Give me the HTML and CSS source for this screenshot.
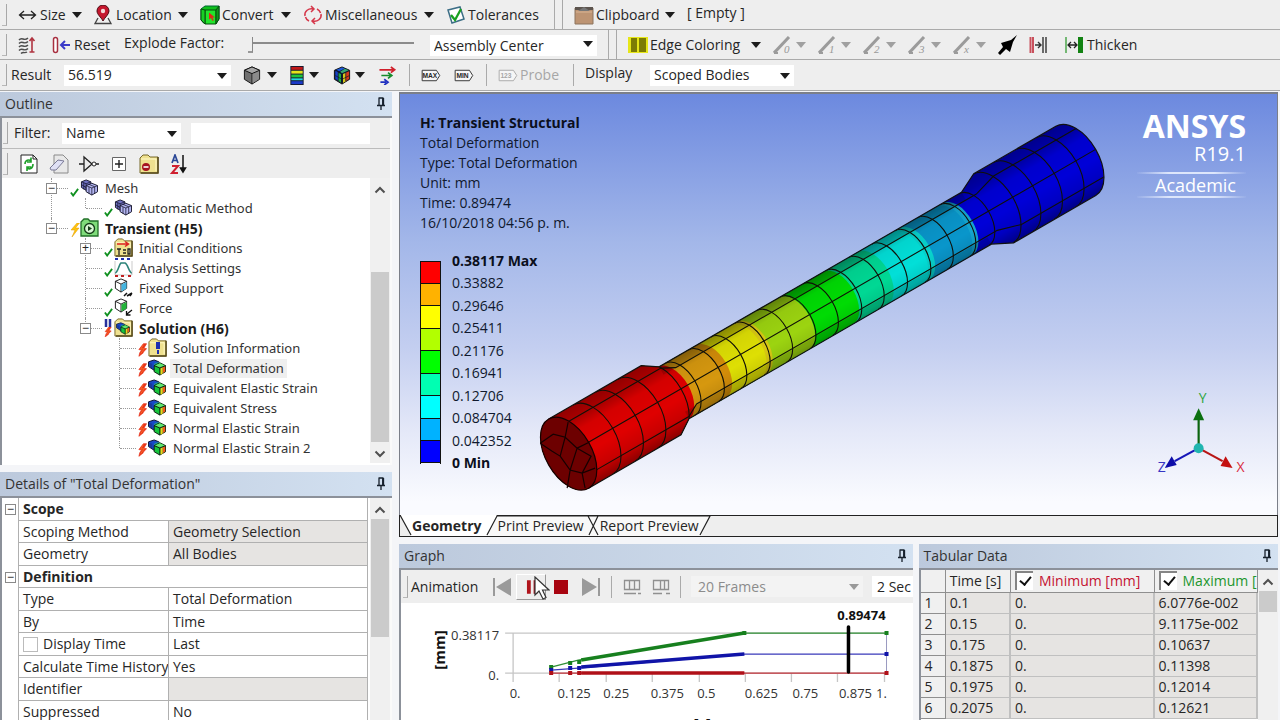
FILE: index.html
```html
<!DOCTYPE html>
<html lang="en">
<head>
<meta charset="utf-8">
<title>Mechanical - Transient Structural</title>
<link rel="stylesheet" href="styles.css">
</head>
<body>
<svg class="defs" aria-hidden="true">
  <symbol id="pin" viewBox="0 0 10 14"><path d="M3 1v7M7.500 1v7M2.500 1h5M1 8.500h8M5 9v4M6.700 1v7" fill="none" stroke="#16202c" stroke-width="1.300"/></symbol>
  <symbol id="up" viewBox="0 0 12 8"><path d="M1.500 6.500 6 2l4.500 4.500" fill="none" stroke="#505050" stroke-width="2"/></symbol>
  <symbol id="down" viewBox="0 0 12 8"><path d="M1.500 1.500 6 6l4.500-4.500" fill="none" stroke="#505050" stroke-width="2"/></symbol>
  <symbol id="cube" viewBox="0 0 20 20"><path d="M10 1 18 4.500V14l-8 5-8-5V4.500z" fill="#6f6f6f" stroke="#111"/><path d="M2 4.500 10 8l8-3.500L10 1z" fill="#a5a5a5" stroke="#111"/><path d="M10 8v11" stroke="#111"/><path d="M10.500 8.500 17.500 5.500v8.300l-7 4.400z" fill="#8b8b8b"/></symbol>
  <symbol id="rcube" viewBox="0 0 20 20"><path d="M10 1 18 4.500V14l-8 5-8-5V4.500z" fill="#0b1430" stroke="#111"/><path d="M3 5l3 1.500v9L3 13.500z" fill="#1640c8"/><path d="M6 7l3 1.500v9l-3-2z" fill="#19a548"/><path d="M4 4l6-2.500 3 1L7 5.500z" fill="#1c59d8"/><path d="M8 6l5-3 4 1.500L10 7.500z" fill="#35a76f"/><path d="M11 8.500 14 7v9l-3 2z" fill="#d7c61a"/><path d="M14 7l3.500-1.500v8L14 16z" fill="#d83a1b"/><path d="M3 10l7 4 8-4M10 8v11M6 6v10M14 7v9" fill="none" stroke="#101820" stroke-width=".7"/></symbol>
  <symbol id="check" viewBox="0 0 10 10"><path d="M1 5.500 3.500 9 9 1.500" fill="none" stroke="#109020" stroke-width="2"/></symbol>
  <symbol id="bolt" viewBox="0 0 10 14"><path d="M6 0 1 6.500l3 .5-2 3-1 4 5-4-.5-.2L9.500 5.500 6.500 5 9.500 0z" fill="#e8341a" stroke="#e8341a" stroke-width=".8"/><path d="M6 1 3 6l4-.5L3 11" fill="none" stroke="#ff7a2c" stroke-width=".8"/></symbol>
  <symbol id="ybolt" viewBox="0 0 10 14"><path d="M7 0 1 7h4l-3 7 7-9H5.500L9.500 0z" fill="#ffc40c" stroke="#e09a00" stroke-width=".5"/></symbol>
  <symbol id="meshcubes" viewBox="0 0 20 18"><path d="M7 1 12 3v6l-5 3-5-3V3z" fill="#7072c4" stroke="#17172e"/><path d="M2 3l5 2 5-2M7 5v7M4.500 4v7M2 6l5 3" fill="none" stroke="#17172e" stroke-width=".8"/><path d="M13 4.500 19 7v6.500L13 17l-6-3.500V7z" fill="#b4b6f2" stroke="#17172e"/><path d="M7 7l6 2.500L19 7M13 9.500V17M10 8.500v7M16 8.500v7M10 5.700l6 2.500" fill="none" stroke="#17172e" stroke-width=".8"/></symbol>
  <symbol id="result" viewBox="0 0 20 18"><path d="M7 1 12 3v7l-5 2-6-4V3z" fill="#1747c9" stroke="#0c1330"/><path d="M7 5l5-2v7l-5 2z" fill="#1ca48e"/><path d="M2 4v4l3 2V5z" fill="#173a9c"/><path d="M13 4 19 7v6.500L13 17l-6-3.500V7z" fill="#16c53d" stroke="#0c1a10"/><path d="M7.500 7 13 4.500 18.500 7 13 9.500z" fill="#5ee66c"/><path d="M13.500 9.500 16 8.500v7l-2.500 1.300z" fill="#e8d61c"/><path d="M16 8.500l2.700-1.200v6L16 15z" fill="#ee5a1c"/><path d="M7 7l6 2.500L19 7M13 9.500V17" fill="none" stroke="#0c1a10"/></symbol>
  <symbol id="folder" viewBox="0 0 20 20"><path d="M1 4 4 1h5l2 2h8v16H1z" fill="#efe18f" stroke="#77682a"/><path d="M2 5h15v12" fill="none" stroke="#fff9c8"/><path d="M19 3v16H2" fill="none" stroke="#55481a" stroke-width="1.500"/></symbol>
  <symbol id="wcube" viewBox="0 0 16 16"><path d="M8 1 14 3.500V11l-6 4-6-4V3.500z" fill="#fff" stroke="#161616"/><path d="M2 3.500 8 6.500l6-3M8 6.500V15" fill="none" stroke="#161616"/></symbol>
  <symbol id="slant" viewBox="0 0 20 20"><path d="M1 18 16 2" stroke="#9b9b9b" stroke-width="3"/><path d="M1 18h4" stroke="#9b9b9b" stroke-width="2"/></symbol>
</svg>

<div class="app">
  <header class="toolbars">
    <div class="bar bar-tools" role="toolbar">
      <i class="grip"></i>
      <button><svg viewBox="0 0 20 20"><path d="M1.500 10h16M6 6l-4.500 4L6 14M13 6l4.500 4-4.500 4" fill="none" stroke="#222" stroke-width="1.300"/></svg>Size<i class="tri"></i></button>
      <button><svg viewBox="0 0 20 20"><path d="M4 13 1 18.500h16L14 13" fill="none" stroke="#444" stroke-width="1.300"/><path d="M9 16C7 12 3 9.500 3 6a6 6 0 0 1 12 0c0 3.500-4 6-6 10z" fill="#c5162d" stroke="#4b0a12"/><circle cx="9" cy="6" r="2.200" fill="#f2d8d8"/></svg>Location<i class="tri"></i></button>
      <button><svg viewBox="0 0 20 20"><path d="M1 4 5 1h14v13l-3 4.500H4L1 15z" fill="#0fbf1c" stroke="#063"/><path d="M5 5h11v14H5z" fill="#22e52c" stroke="#064d0c"/><path d="m16 5 3-4v13l-3 5z" fill="#0c9a18" stroke="#064d0c"/><path d="M1 4l4 1v14l-4-4z" fill="#18cf24" stroke="#064d0c"/><path d="M9 7.500v7l2-1.500 1.500 3 1.300-.7-1.400-2.800H15z" fill="#e02818"/></svg>Convert<i class="tri"></i></button>
      <button><svg viewBox="0 0 20 20"><path d="M2 11C1 6 6 3 10 4M8 1l3 3-3 3M18 9c1 5-4 8-8 7M12 19l-3-3 3-3M14 4c2 1 3 2 3.500 4M6 16c-2-1-3-2-3.500-4" fill="none" stroke="#d5374a" stroke-width="1.500"/></svg>Miscellaneous<i class="tri"></i></button>
      <button class="last"><svg viewBox="0 0 20 20"><path d="M2 5 14 2l4 12L6 18z" fill="#fff" stroke="#3c6e86" stroke-width="1.500"/><path d="M5 10l4 5 6-11" fill="none" stroke="#18a020" stroke-width="2.300"/></svg>Tolerances</button>
      <i class="grip split"></i>
      <button><svg viewBox="0 0 20 20"><path d="M1 3h18v16H1z" fill="#bd9473" stroke="#8c745f"/><path d="M1 2h18v3H1z" fill="#5c544e"/><path d="M4 6 10 2l6 4z" fill="#777"/><path d="M2 7h16" stroke="#d9b596"/></svg>Clipboard<i class="tri"></i></button>
      <span class="raised">[ Empty ]</span>
    </div>
    <div class="bar bar-explode" role="toolbar">
      <i class="grip"></i>
      <button aria-label="Explode view"><svg viewBox="0 0 20 20"><path d="M1 5c3-4 5 2 9-2M1 8.500c3-4 5 2 9-2M1 12c3-4 5 2 9-2M1 15.500c3-4 5 2 9-2M3 18.500c2-2 4 0 6-1.500" fill="none" stroke="#4c4c4c" stroke-width="1.400"/><path d="M14 4v13M11.500 6 14 3l2.500 3M11.500 17h5" fill="none" stroke="#b03440" stroke-width="1.600"/></svg></button>
      <button><svg viewBox="0 0 20 20"><rect x="1.500" y="2.500" width="4" height="15" rx="2" fill="#fff" stroke="#a83040" stroke-width="1.500"/><path d="M9 10h9M13 6l-4 4 4 4" fill="none" stroke="#3a3ac8" stroke-width="2"/></svg>Reset</button>
      <label class="raised" for="explode">Explode Factor:</label>
      <input id="explode" type="range" min="0" max="100" value="0">
      <span class="select"><select aria-label="Center"><option>Assembly Center</option></select></span>
      <i class="grip split"></i>
      <button><svg viewBox="0 0 20 20"><path d="M0 2h20v16H0z" fill="#e6e619"/><path d="M3 3h6v14H3zM11 3h7v14h-7z" fill="#7c7c05"/></svg>Edge Coloring<i class="tri"></i></button>
      <button class="dim" aria-label="Free edges"><svg viewBox="0 0 20 20"><use href="#slant"/><text x="11" y="18">0</text></svg><i class="tri"></i></button>
      <button class="dim" aria-label="Single edges"><svg viewBox="0 0 20 20"><use href="#slant"/><text x="11" y="18">1</text></svg><i class="tri"></i></button>
      <button class="dim" aria-label="Double edges"><svg viewBox="0 0 20 20"><use href="#slant"/><text x="11" y="18">2</text></svg><i class="tri"></i></button>
      <button class="dim" aria-label="Triple edges"><svg viewBox="0 0 20 20"><use href="#slant"/><text x="11" y="18">3</text></svg><i class="tri"></i></button>
      <button class="dim" aria-label="Multiple edges"><svg viewBox="0 0 20 20"><use href="#slant"/><text x="11" y="18">x</text></svg><i class="tri"></i></button>
      <button aria-label="Edge direction"><svg viewBox="0 0 20 20"><path d="M0 18 5 12 3 8l10-3 6-5-4 7-3 10-4-3-6 6z" fill="#000"/></svg></button>
      <button aria-label="Show contact"><svg viewBox="0 0 20 20"><path d="M1.500 2v16M4 2v16" stroke="#c9505c" stroke-width="2"/><path d="M6 10h6M9 7l3 3-3 3M14 2v16M17 2v16" fill="none" stroke="#333" stroke-width="1.400"/></svg></button>
      <button><svg viewBox="0 0 20 20"><path d="M1 2v16" stroke="#4ba64b" stroke-width="1.500"/><path d="M3 10h9M6 7l-3 3 3 3M9 7l3 3-3 3" fill="none" stroke="#222" stroke-width="1.300"/><path d="M13 2h5v16h-5z" fill="#128212"/></svg>Thicken</button>
    </div>
    <div class="bar bar-result" role="toolbar">
      <i class="grip"></i>
      <label for="scale">Result</label>
      <span class="select"><select id="scale"><option>56.519</option></select></span>
      <button aria-label="Geometry view"><svg viewBox="0 0 20 20"><use href="#cube"/></svg><i class="tri"></i></button>
      <button aria-label="Contours"><svg class="narrow" viewBox="0 0 14 20"><path d="M0 0h14v20H0z" fill="#141a30"/><path d="M1 1h12v3H1z" fill="#c01818"/><path d="M1 5h12v3H1z" fill="#e6e21a"/><path d="M1 9h12v3H1z" fill="#1fc43b"/><path d="M1 13h12v2H1z" fill="#22d9e0"/><path d="M1 16h12v3H1z" fill="#1b3ac9"/></svg><i class="tri"></i></button>
      <button aria-label="Edges"><svg viewBox="0 0 20 20"><use href="#rcube"/></svg><i class="tri"></i></button>
      <button class="sep" aria-label="Vectors"><svg viewBox="0 0 20 20"><path d="M1 4h15M13 1l4 3-4 3" fill="none" stroke="#d0202c" stroke-width="1.800"/><path d="M3 10h10M10 7l4 3-4 3" fill="none" stroke="#178c2c" stroke-width="1.800"/><path d="M2 17h6M6 14l4 3-4 3" fill="none" stroke="#2030c0" stroke-width="1.800"/></svg></button>
      <button aria-label="Maximum"><svg viewBox="0 0 20 20"><path d="M.700 4.500h15l3.500 5.500-3.500 5.500h-15z" fill="#f6f6f6" stroke="#333"/><text class="tag" x="1" y="13">MAX</text></svg></button>
      <button class="sep" aria-label="Minimum"><svg viewBox="0 0 20 20"><path d="M.700 4.500h15l3.500 5.500-3.500 5.500h-15z" fill="#f6f6f6" stroke="#333"/><text class="tag" x="2" y="13">MIN</text></svg></button>
      <button class="dim sep"><svg viewBox="0 0 20 20"><path d="M.700 4.500h15l3.500 5.500-3.500 5.500h-15z" fill="#f6f6f6" stroke="#aaa"/><text class="tag" x="2" y="13">123</text></svg>Probe</button>
      <label class="raised" for="display">Display</label>
      <span class="select"><select id="display"><option>Scoped Bodies</option></select></span>
    </div>
  </header>

  <main class="workspace">
    <aside class="side">
      <section class="panel outline">
        <h2>Outline<svg><use href="#pin"/></svg></h2>
        <div class="panel-body">
          <div class="filter">
            <i class="grip"></i><label for="filter">Filter:</label>
            <span class="select"><select id="filter"><option>Name</option></select></span>
            <input type="text" aria-label="Filter text">
          </div>
          <div class="tree-tools">
            <i class="grip"></i>
            <button aria-label="Refresh"><svg viewBox="0 0 20 20"><path d="M2 1h12l4 4v14H2z" fill="#fff" stroke="#222"/><path d="M14 1v4h4" fill="none" stroke="#222"/><path d="M6 10c0-4 4-5 6-3M12 3.500V8H8M14 10c0 5-4 6-6 3.500M8 17v-4h4" fill="none" stroke="#1fa02a" stroke-width="1.600"/></svg></button>
            <button aria-label="Clear"><svg viewBox="0 0 20 20"><path d="M5 1h9l5 5v13H5z" fill="#e8e8e8" stroke="#8a8a8a"/><path d="M1 14 9 6l6 1-8 9H2z" fill="#dfe0f5" stroke="#7a7a96"/></svg></button>
            <button aria-label="Filter gate"><svg viewBox="0 0 20 20"><path d="M0 10h5M5 3v14l8-7zM17 10h3" fill="none" stroke="#222" stroke-width="1.300"/><circle cx="15" cy="10" r="2" fill="#fff" stroke="#222"/></svg></button>
            <button aria-label="Expand all"><svg viewBox="0 0 20 20"><path d="M3.500 3.500h13v13h-13z" fill="#fff" stroke="#666"/><path d="M6 10h8M10 6v8" stroke="#222" stroke-width="1.400"/></svg></button>
            <button aria-label="Collapse folders"><svg viewBox="0 0 20 20"><use href="#folder"/><circle cx="7" cy="13" r="4" fill="#a51420"/><path d="M4.500 13h5" stroke="#fff" stroke-width="1.600"/></svg></button>
            <button aria-label="Sort"><svg viewBox="0 0 20 20"><path d="M3 9 6 1l3 8M4 6.500h4" fill="none" stroke="#2a4796" stroke-width="1.700"/><path d="M3 12h6l-6 7h6" fill="none" stroke="#cf2030" stroke-width="2"/><path d="M14 1v16M11.500 14l2.500 4 2.500-4z" fill="#111" stroke="#111" stroke-width="1.500"/></svg></button>
          </div>
          <div class="tree-wrap">
            <ul class="tree">
              <li><div class="row"><i class="box">−</i><svg viewBox="0 0 30 20"><use href="#check" x="0" y="9" width="9" height="10"/><use href="#meshcubes" x="9" y="1" width="20" height="17"/></svg><span>Mesh</span></div>
                <ul>
                  <li><div class="row"><i></i><svg viewBox="0 0 30 20"><use href="#check" x="0" y="9" width="9" height="10"/><use href="#meshcubes" x="9" y="1" width="20" height="17"/></svg><span>Automatic Method</span></div></li>
                </ul>
              </li>
              <li><div class="row"><i class="box">−</i><svg viewBox="0 0 30 20"><use href="#ybolt" x="0" y="5" width="10" height="14"/><path d="M11 4 14 1h4l2 2h8v15H11z" fill="#7fdc7a" stroke="#227028" stroke-width="1.300"/><circle cx="19.500" cy="10.500" r="5" fill="#d8f8d4" stroke="#143c18" stroke-width="1.300"/><path d="m18 8 4 2.500-4 2.500z" fill="#143c18"/></svg><b>Transient (H5)</b></div>
                <ul>
                  <li><div class="row"><i class="box">+</i><svg viewBox="0 0 30 20"><use href="#check" x="0" y="9" width="9" height="10"/><use href="#folder" x="10" y="0" width="19" height="19"/><path d="M13 6h11M21 3.500 24.500 6 21 8.500" fill="none" stroke="#d22" stroke-width="1.500"/><path d="M13 11h4M15 11v6M19 12h3M19 15h3M24 11h2v5h-2z" fill="none" stroke="#222" stroke-width="1.300"/></svg><span>Initial Conditions</span></div></li>
                  <li><div class="row"><i></i><svg viewBox="0 0 30 20"><use href="#check" x="0" y="9" width="9" height="10"/><path d="M11 15c3 0 4-9 6-10h4c3 1 4 10 7 10" fill="none" stroke="#2b8378" stroke-width="1.600"/><path d="M11 1h3M17 1h3M23 1h3" stroke="#2030b0" stroke-width="2"/><path d="M11 3v14h17V3" fill="none" stroke="#aaa" stroke-width=".6"/><path d="M11 18h3M17 18h3M24 18h3" stroke="#c02020" stroke-width="2"/></svg><span>Analysis Settings</span></div></li>
                  <li><div class="row"><i></i><svg viewBox="0 0 30 20"><use href="#check" x="0" y="9" width="9" height="10"/><use href="#wcube" x="9" y="0" width="16" height="15"/><path d="M17.500 6.500 22.500 4v6.500l-5 3z" fill="#45b5e0"/><path d="m20 18 3-3M23 18l5-3M26 18l2-3" stroke="#111" stroke-width="1.500"/></svg><span>Fixed Support</span></div></li>
                  <li><div class="row"><i></i><svg viewBox="0 0 30 20"><use href="#check" x="0" y="9" width="9" height="10"/><use href="#wcube" x="9" y="0" width="16" height="15"/><path d="M17.500 6.500 22.500 4v6.500l-5 3z" fill="#23b53a"/><path d="m28 12-5 4M22.500 13v4h4" fill="none" stroke="#111" stroke-width="1.300"/></svg><span>Force</span></div></li>
                  <li><div class="row"><i class="box">−</i><svg viewBox="0 0 30 20"><path d="M2 1v8M6 1v8" stroke="#28309c" stroke-width="2.500"/><use href="#bolt" x="0" y="9" width="8" height="10"/><use href="#folder" x="10" y="0" width="19" height="19"/><use href="#result" x="11" y="4" width="16" height="13"/></svg><b>Solution (H6)</b></div>
                    <ul>
                      <li><div class="row"><i></i><svg viewBox="0 0 30 20"><use href="#bolt" x="0" y="5" width="9" height="14"/><use href="#folder" x="10" y="0" width="19" height="19"/><path d="M18 4h4v7h-4zM19 12h2v4h-2z" fill="#1d2fb0"/></svg><span>Solution Information</span></div></li>
                      <li><div class="row"><i></i><svg viewBox="0 0 30 20"><use href="#bolt" x="0" y="5" width="9" height="14"/><use href="#result" x="9" y="1" width="20" height="17"/></svg><span class="on">Total Deformation</span></div></li>
                      <li><div class="row"><i></i><svg viewBox="0 0 30 20"><use href="#bolt" x="0" y="5" width="9" height="14"/><use href="#result" x="9" y="1" width="20" height="17"/></svg><span>Equivalent Elastic Strain</span></div></li>
                      <li><div class="row"><i></i><svg viewBox="0 0 30 20"><use href="#bolt" x="0" y="5" width="9" height="14"/><use href="#result" x="9" y="1" width="20" height="17"/></svg><span>Equivalent Stress</span></div></li>
                      <li><div class="row"><i></i><svg viewBox="0 0 30 20"><use href="#bolt" x="0" y="5" width="9" height="14"/><use href="#result" x="9" y="1" width="20" height="17"/></svg><span>Normal Elastic Strain</span></div></li>
                      <li><div class="row"><i></i><svg viewBox="0 0 30 20"><use href="#bolt" x="0" y="5" width="9" height="14"/><use href="#result" x="9" y="1" width="20" height="17"/></svg><span>Normal Elastic Strain 2</span></div></li>
                    </ul>
                  </li>
                </ul>
              </li>
            </ul>
            <div class="scroll tree-scroll"><svg><use href="#up"/></svg><i></i><svg><use href="#down"/></svg></div>
          </div>
        </div>
      </section>

      <section class="panel details">
        <h2>Details of "Total Deformation"<svg><use href="#pin"/></svg></h2>
        <div class="panel-body split-body">
          <table class="props">
            <colgroup><col class="c-gut"><col class="c-key"><col></colgroup>
            <tr><td class="gut"><i class="box">−</i></td><th colspan="2">Scope</th></tr>
            <tr><td class="gut"></td><td>Scoping Method</td><td class="ro">Geometry Selection</td></tr>
            <tr><td class="gut"></td><td>Geometry</td><td class="ro">All Bodies</td></tr>
            <tr><td class="gut"><i class="box">−</i></td><th colspan="2">Definition</th></tr>
            <tr><td class="gut"></td><td>Type</td><td>Total Deformation</td></tr>
            <tr><td class="gut"></td><td>By</td><td>Time</td></tr>
            <tr><td class="gut"></td><td><label><input type="checkbox">Display Time</label></td><td>Last</td></tr>
            <tr><td class="gut"></td><td>Calculate Time History</td><td>Yes</td></tr>
            <tr><td class="gut"></td><td>Identifier</td><td class="ro"></td></tr>
            <tr><td class="gut"></td><td>Suppressed</td><td>No</td></tr>
          </table>
          <div class="scroll details-scroll"><svg><use href="#up"/></svg><i></i></div>
        </div>
      </section>
    </aside>

    <div class="main">
      <section class="viewport">
        <svg class="scene" viewBox="400 93 878 422" preserveAspectRatio="xMidYMid meet">
          <defs>
            <linearGradient id="shade" x1="0" y1="-40" x2="0" y2="40" gradientUnits="userSpaceOnUse">
              <stop offset="0" stop-color="#000" stop-opacity=".35"/><stop offset=".15" stop-color="#000" stop-opacity=".25"/><stop offset=".3" stop-color="#000" stop-opacity=".05"/><stop offset=".6" stop-color="#000" stop-opacity="0"/><stop offset=".82" stop-color="#000" stop-opacity=".1"/><stop offset="1" stop-color="#000" stop-opacity=".38"/>
            </linearGradient>
            <clipPath id="body"><path d="M0-40H107L122-30H472L492-40H587A23 40 0 0 1 587 40H492L472 30H122L107 40H0A23 40 0 0 1 0-40z"/></clipPath>
          </defs>
          <g transform="translate(568.500 453.500) rotate(-30)">
            <g clip-path="url(#body)">
              <path d="M-30-45H640V45H-30z" fill="#0000d8"/>
              <path d="M-30-45H440L450-30A17 30 0 0 1 450 30V45H-30z" fill="#14a5cf"/>
              <path d="M-30-45H440L443-30A17 30 0 0 1 443 30V45H-30z" fill="#0996cb"/>
              <path d="M-30-45H400V-30A17 30 0 0 1 400 30V45H-30z" fill="#08d2cc"/>
              <path d="M-30-45H392V-30A17 30 0 0 1 392 30V45H-30z" fill="#02dfd8"/>
              <path d="M-30-45H352V-30A17 30 0 0 1 352 30V45H-30z" fill="#00d894"/>
              <path d="M-30-45H312V-30A17 30 0 0 1 312 30V45H-30z" fill="#00dc04"/>
              <path d="M-30-45H261V-30A17 30 0 0 1 261 30V45H-30z" fill="#9cd410"/>
              <path d="M-30-45H212V-30A17 30 0 0 1 212 30V45H-30z" fill="#d9c814"/>
              <path d="M-30-45H205V-30A17 30 0 0 1 205 30V45H-30z" fill="#dedf04"/>
              <path d="M-30-45H165V-30A17 30 0 0 1 165 30V45H-30z" fill="#d28c09"/>
              <path d="M-30-45H156V-30A17 30 0 0 1 156 30V45H-30z" fill="#d6980f"/>
              <path d="M-30-45H120V-31A18 31 0 0 1 120 31V45H-30z" fill="#df0000"/>
              <path d="M-30-45H640V45H-30z" fill="url(#shade)"/>
              <path d="M122-30H472V-21H122zM122 22H472V30H122z" fill="#000" opacity=".15"/>
              <g fill="none" stroke="#101008" stroke-width="1.100">
                <path d="M28-40A23 40 0 0 1 28 40M54-40A23 40 0 0 1 54 40M80-40A23 40 0 0 1 80 40M107-40A23 40 0 0 1 107 40M129-30A17 30 0 0 1 129 30M156-30A17 30 0 0 1 156 30M182-30A17 30 0 0 1 182 30M209-30A17 30 0 0 1 209 30M235-30A17 30 0 0 1 235 30M262-30A17 30 0 0 1 262 30M288-30A17 30 0 0 1 288 30M315-30A17 30 0 0 1 315 30M341-30A17 30 0 0 1 341 30M368-30A17 30 0 0 1 368 30M395-30A17 30 0 0 1 395 30M421-30A17 30 0 0 1 421 30M447-30A17 30 0 0 1 447 30M469-30A17 30 0 0 1 469 30M491-40A23 40 0 0 1 491 40M514-40A23 40 0 0 1 514 40M539-40A23 40 0 0 1 539 40M564-40A23 40 0 0 1 564 40"/>
                <path d="M16-28H123L136-21H484L508-28H604M23 0H610M16 28H123L136 21H484L508 28H604"/>
              </g>
            </g>
            <path d="M0-40H107L122-30H472L492-40H587A23 40 0 0 1 587 40H492L472 30H122L107 40H0" fill="none" stroke="#111" stroke-width="1.200"/>
            <ellipse rx="23" ry="40" fill="#6d0000" stroke="#160000" stroke-width="1.200"/>
          </g>
          <path d="m568 422-3 15 12 11 12-6M540 443l13-9 12 3-5 19-8-5-12-8M560 456l10 14-3 18M577 448l-7 22 12 3 13-5M577 448l14 8-9 17 3 15" fill="none" stroke="#160000" stroke-width="1.200"/>
          <g stroke-width="2.200">
            <path d="M1200 448v-29" stroke="#0b640f"/><path d="m1200 408-5.500 12h11z" fill="#0b7010"/>
            <path d="m1200 448-24 13" stroke="#1616b8"/><path d="m1166 468 7-12 5 9z" fill="#0d0da8"/>
            <path d="m1200 448 24 13" stroke="#b81616"/><path d="m1234 468-12-2 5-10z" fill="#c41010"/>
            <circle cx="1200" cy="448" r="5" fill="#20b5b0"/>
          </g>
          <text class="axis" x="1200" y="403" fill="#2fa53c">Y</text><text class="axis" x="1159" y="472" fill="#3636c4">Z</text><text class="axis" x="1238" y="472" fill="#da2c3c">X</text>
        </svg>
        <div class="caption">
          <b>H: Transient Structural</b>
          <p>Total Deformation</p><p>Type: Total Deformation</p><p>Unit: mm</p><p>Time: 0.89474</p><p>16/10/2018 04:56 p. m.</p>
          <div class="legend">
            <div class="swatches"><i class="k1"></i><i class="k2"></i><i class="k3"></i><i class="k4"></i><i class="k5"></i><i class="k6"></i><i class="k7"></i><i class="k8"></i><i class="k9"></i></div>
            <ol><li><b>0.38117 Max</b></li><li>0.33882</li><li>0.29646</li><li>0.25411</li><li>0.21176</li><li>0.16941</li><li>0.12706</li><li>0.084704</li><li>0.042352</li><li><b>0 Min</b></li></ol>
          </div>
        </div>
        <div class="brand"><strong>ANSYS</strong><span>R19.1</span><em>Academic</em></div>
      </section>

      <nav class="tabs">
        <svg viewBox="0 0 312 22"><path d="M0 0 11 21H86L97 0z" fill="#fff"/><path d="M97 1H310L301 21H86z" fill="#f8f8f8"/><path d="M0 0 11 20M87 20 97 1H310L300 20M188 1l10 19M198 1 189 20" fill="none" stroke="#222" stroke-width="1.200"/></svg>
        <button class="current">Geometry</button><button>Print Preview</button><button>Report Preview</button>
      </nav>

      <div class="bottom">
        <section class="panel graph">
          <h2>Graph<svg><use href="#pin"/></svg></h2>
          <div class="panel-body">
            <div class="anim">
              <i class="grip"></i><span>Animation</span>
              <button aria-label="First frame"><svg viewBox="0 0 20 20"><path d="M1 1h2v18H1zM19 1v18L4 10z" fill="#9a9a9a"/></svg></button>
              <button class="pause" aria-label="Pause"><svg viewBox="0 0 20 20"><path d="M1 3h4v14H1zM8 3h4v14H8z" fill="#b0141c"/></svg><svg class="pointer" viewBox="0 0 16 24"><path d="M1 1v18l4-4 4 8 3-1.500L8.500 14H15z" fill="#fff" stroke="#333" stroke-width="1.200"/></svg></button>
              <button aria-label="Stop"><svg viewBox="0 0 20 20"><path d="M1 3h14v14H1z" fill="#a80410"/></svg></button>
              <button aria-label="Last frame"><svg viewBox="0 0 20 20"><path d="M17 1h2v18h-2zM1 1v18l15-9z" fill="#9a9a9a"/></svg></button>
              <i class="rule"></i>
              <button aria-label="Distributed"><svg viewBox="0 0 20 20"><path d="M2.500 3.500h15v9h-15zM7.500 3.500v9M12.500 3.500v9M2 16.500h12M16 16.500h3" fill="none" stroke="#909090" stroke-width="1.300"/></svg></button>
              <button class="after" aria-label="Result sets"><svg viewBox="0 0 20 20"><path d="M2.500 3.500h15v9h-15zM9.500 3.500v9M13.500 3.500v9M2 16.500h9M15 16.500h4" fill="none" stroke="#909090" stroke-width="1.300"/></svg></button>
              <i class="rule"></i>
              <span class="select off"><select aria-label="Frames" disabled><option>20 Frames</option></select></span>
              <input type="text" value="2 Sec" aria-label="Duration">
            </div>
            <svg class="plot" viewBox="400 603 511 117" preserveAspectRatio="xMinYMin meet">
              <path d="M504 633h381M504 673h381M512 633v49M558 673v9M605 673v9M651 673v9M698 673v9M744 673v9M790 673v9M836 673v9M883 673v9" fill="none" stroke="#c6c6c6" stroke-width="1.300"/>
              <path d="M885 633v40" stroke="#9a9ac0"/>
              <path d="M550 667 577 660 743 633H885" fill="none" stroke="#2f8f35" stroke-width="1.300"/><path d="M580 660 743 633" stroke="#17801e" stroke-width="3.500"/>
              <path d="M550 670 577 668 743 654H885" fill="none" stroke="#3a3aba" stroke-width="1.300"/><path d="M580 667 743 654" stroke="#1014a8" stroke-width="3.500"/>
              <path d="M550 673H885" stroke="#c03038" stroke-width="1.300"/><path d="M580 673H743" stroke="#b01018" stroke-width="3.500"/>
              <path d="M548 665h4v4h-4zM567 661h4v4h-4zM576 660h4v4h-4zM741 631h4v4h-4zM883 631h4v4h-4z" fill="#17801e"/>
              <path d="M548 668h4v4h-4zM567 666h4v4h-4zM576 666h4v4h-4zM883 652h4v4h-4z" fill="#1014a8"/>
              <path d="M548 671h4v4h-4zM567 671h4v4h-4zM576 671h4v4h-4zM883 671h4v4h-4z" fill="#b01018"/>
              <path d="M847 627v45" stroke="#000" stroke-width="3.500" stroke-linecap="round"/>
              <g class="end"><text x="498" y="640">0.38117</text><text x="498" y="680">0.</text></g>
              <g class="mid"><text x="514" y="698">0.</text><text x="573" y="698">0.125</text><text x="615" y="698">0.25</text><text x="666" y="698">0.375</text><text x="705" y="698">0.5</text><text x="760" y="698">0.625</text><text x="804" y="698">0.75</text><text x="854" y="698">0.875</text><text x="880" y="698">1.</text><text class="strong" x="860" y="620">0.89474</text><text class="strong big" x="701" y="729">[s]</text><text class="strong big" transform="translate(444 650) rotate(-90)">[mm]</text></g>
            </svg>
          </div>
        </section>
        <section class="panel tabular">
          <h2>Tabular Data<svg><use href="#pin"/></svg></h2>
          <div class="panel-body split-body">
            <div class="table-clip">
            <table class="data">
              <colgroup><col class="d-n"><col class="d-t"><col class="d-min"><col class="d-max"></colgroup>
              <thead><tr><th></th><th>Time [s]</th><th class="red"><label><input type="checkbox" checked>Minimum [mm]</label></th><th class="green"><label><input type="checkbox" checked>Maximum [</label></th></tr></thead>
              <tbody>
                <tr><th>1</th><td>0.1</td><td>0.</td><td>6.0776e-002</td></tr>
                <tr><th>2</th><td>0.15</td><td>0.</td><td>9.1175e-002</td></tr>
                <tr><th>3</th><td>0.175</td><td>0.</td><td>0.10637</td></tr>
                <tr><th>4</th><td>0.1875</td><td>0.</td><td>0.11398</td></tr>
                <tr><th>5</th><td>0.1975</td><td>0.</td><td>0.12014</td></tr>
                <tr><th>6</th><td>0.2075</td><td>0.</td><td>0.12621</td></tr>
              </tbody>
            </table>
            </div>
            <div class="scroll data-scroll"><svg><use href="#up"/></svg><i></i></div>
          </div>
        </section>
      </div>
    </div>
  </main>
</div>
</body>
</html>
```
FILE: styles.css
```css
* { box-sizing: border-box; }
body { margin: 0; background: #f4f5f8; color: #262626; font: 14px/20px "Open Sans", "Noto Sans", sans-serif; overflow: hidden; }
button, input, select { font: inherit; color: inherit; margin: 0; }
button { border: 0; padding: 0; background: none; display: flex; align-items: center; white-space: nowrap; }
h2, p, ul, ol { margin: 0; padding: 0; list-style: none; }
i { font-style: normal; }
.defs { position: absolute; width: 0; height: 0; }
.app { height: 100vh; display: flex; flex-direction: column; }

/* toolbars */
.toolbars { flex: none; background: #eee; }
.bar { height: 30px; display: grid; align-items: center; border-bottom: 1px solid #aaa; white-space: nowrap; }
.bar-tools { grid-template-columns: 18px 76px 106px 103px 143px 108px 20px 113px 1fr; }
.bar-explode { grid-template-columns: 18px 34px 72px 124px 182px 178px 20px 145px repeat(5, 45px) 31px 36px 1fr; }
.bar-result { height: 31px; grid-template-columns: 11px 53px 178px 48px 42px 46px 43px 33px 44px 87px 65px 144px; }
.bar button > svg { width: 20px; height: 20px; flex: none; margin-right: 2px; }
.bar-result button > svg { height: 19px; }
.bar-result button > .narrow { width: 14px; }
.bar .tri { margin: 0 12px 0 auto; }
.tri { border: 5px solid transparent; border-top: 6px solid #1c1c1c; border-bottom: 0; }
.bar-result .tri { margin-right: 13px; }
.dim { color: #a6a6a6; }
.dim .tri { border-top-color: #a0a0a0; }
.dim text { font: italic 11px "Liberation Serif", serif; fill: #999; }
.bar text.tag { font: 700 7px "Liberation Sans", sans-serif; fill: currentColor; }
.grip { width: 5px; height: 22px; margin-left: 2px; border-right: 1px solid #a8a8a8; border-bottom: 1px solid #b8b8b8; }
.split { border-left: 1px solid #aaa; width: 9px; height: 29px; margin-left: 0; border-bottom: 0; }
.raised { padding-bottom: 4px; }
.sep { position: relative; }
.sep::after { content: ""; position: absolute; right: 11px; height: 22px; border-right: 1px solid #aaa; }
.select { position: relative; display: block; }
.select::after { content: ""; position: absolute; right: 4px; top: 8px; border: 5px solid transparent; border-top: 6px solid #1c1c1c; border-bottom: 0; }
select { appearance: none; width: 100%; height: 21px; border: 0; border-radius: 0; background: #fff; padding: 0 4px; display: block; }
.bar-explode .select, .bar-result .select { margin-right: 11px; }
.bar-explode .select { padding-top: 2px; }
.bar-result .select:last-child { margin-right: 0; }
input[type="range"] { appearance: none; width: 166px; height: 20px; background: linear-gradient(#8b8b8b, #8b8b8b) 0 7px / 100% 2px no-repeat; }
input[type="range"]::-webkit-slider-thumb { appearance: none; width: 5px; height: 16px; background: #eee; border-right: 1px solid #888; border-bottom: 2px solid #999; }

/* panels */
.workspace { flex: 1; min-height: 0; display: grid; grid-template-columns: 392px minmax(0, 1fr); column-gap: 7px; padding-top: 1px; }
.side { display: grid; grid-template-rows: 373px minmax(0, 1fr); row-gap: 7px; min-height: 0; }
.panel { display: flex; flex-direction: column; min-height: 0; min-width: 0; overflow: hidden; }
.panel h2 { flex: none; height: 26px; padding: 0 6px 0 5px; display: flex; align-items: center; justify-content: space-between; font-weight: 400; font-size: 14px; color: #333; background: linear-gradient(90deg, #bcc9dc, #d3e1f1); border-bottom: 2px solid #8c919a; }
.panel h2 svg { width: 10px; height: 14px; }
.panel-body { flex: 1; min-height: 0; background: #fff; border-left: 2px solid #8c919a; }
.side .panel-body { border-right: 2px solid #fafafa; }
.split-body { display: flex; }
.filter { height: 31px; display: grid; grid-template-columns: 12px 48px 119px 10px 1fr; padding-right: 20px; align-items: center; background: #eee; border-bottom: 1px solid #bbb; }
.filter .grip, .tree-tools .grip { margin-left: 1px; }
.filter input { grid-column: 5; width: 100%; height: 21px; border: 0; }
.tree-tools { height: 29px; display: grid; grid-template-columns: 17px repeat(6, 30px); align-items: center; background: #eee; }
.tree-tools svg { width: 20px; height: 20px; }
.tree-wrap { display: flex; height: 285px; overflow: hidden; }
.tree { flex: 1; padding-left: 43px; font-family: "Noto Sans", "Open Sans", sans-serif; }
.tree ul { margin-left: 34px; }
.tree li { position: relative; }
.tree li::before { content: ""; position: absolute; left: 6px; top: 0; bottom: 0; border-left: 1px dotted #999; }
.tree li:last-child::before { bottom: auto; height: 10px; }
.row { position: relative; display: flex; align-items: center; height: 20px; }
.row::before { content: ""; position: absolute; left: 7px; width: 16px; border-top: 1px dotted #999; }
.row > i { position: relative; flex: none; width: 11px; margin: 0 13px 0 1px; }
.row > svg { width: 30px; height: 20px; flex: none; margin-right: 2px; }
.row span, .row b { padding: 0 3px; line-height: 19px; white-space: nowrap; color: #333; }
.row span { font-size: 13px; }
.row b { color: #1c1c1c; }
.row .on { background: #efefef; }
.box { display: block; width: 11px; height: 11px; border: 1px solid #8a8a8a; background: #fff; font: 12px/9px "Liberation Sans", sans-serif; text-align: center; }
.scroll { flex: none; width: 20px; background: #f0f0f0; display: flex; flex-direction: column; align-items: center; padding-top: 8px; }
.scroll svg { width: 12px; height: 8px; flex: none; }
.scroll i { width: 18px; background: #cbcbcb; }
.tree-scroll i { margin-top: 78px; height: 170px; }
.tree-scroll svg:last-child { margin-top: 8px; }
.details-scroll i { margin-top: 5px; height: 118px; }
.data-scroll i { margin-top: 5px; height: 21px; }

/* property and data tables */
table { border-collapse: separate; border-spacing: 0; table-layout: fixed; }
td, th { padding: 0; text-align: left; white-space: nowrap; overflow: hidden; }
.details .split-body { align-items: flex-start; }
.details .scroll { align-self: stretch; }
.props { width: calc(100% - 22px); margin-right: 2px; }
.c-gut { width: 17px; }
.c-key { width: 150px; }
.props tr { height: 23px; }
.props tr:nth-child(even) { height: 22px; }
.props td, .props th { border: 1px solid #b0b0b0; border-width: 0 1px 1px 0; padding-left: 4px; line-height: 20px; }
.props .gut { border-bottom: 0; padding: 0 3px; }
.props .ro { background: #e6e4e2; }
.props input { appearance: none; width: 15px; height: 15px; border: 1px solid #bbb; margin-right: 5px; vertical-align: -3px; background: #fff; }
.table-clip { flex: 1; overflow: hidden; }
.data { width: 100%; min-width: 336px; }
.d-n { width: 25px; } .d-t { width: 65px; } .d-min { width: 143px; } .d-max { width: 103px; }
.data tr { height: 21px; }
.data td, .data th { font-weight: 400; height: 21px; line-height: 20px; padding-left: 4px; border: 1px solid #c0c0c0; border-width: 0 2px 1px 0; background: #e6e4e2; }
.data th { background: #f0f0f0; border-color: #8f8f8f; border-right-width: 1px; }
.data thead th { height: 23px; }
.data .red { color: #c41230; } .data .green { color: #21962d; }
.data .green label { display: block; }
.data input { appearance: none; width: 18px; height: 19px; margin: 0 6px 0 0; border: 2px solid #858585; border-width: 2px 0 0 2px; background: #fff; vertical-align: top; position: relative; }
.data input:checked::after { content: ""; position: absolute; left: 5px; top: 1px; width: 5px; height: 9px; border: solid #111; border-width: 0 2px 2px 0; transform: rotate(40deg); }

/* 3D view */
.main { display: grid; grid-template-rows: minmax(0, 1fr) 22px 183px; min-height: 0; padding-right: 2px; }
.viewport { position: relative; overflow: hidden; border: 1px solid #7b7f89; border-top-width: 2px; border-bottom: 0; background: linear-gradient(#6c89df, #a3b7e9 35%, #c3cef0 60%, #e4e8f8 80%, #fafbff 97%); color: #10192e; }
.scene { position: absolute; left: 0; top: 0; width: 100%; height: 100%; }
.axis { font: 14px "Open Sans", sans-serif; }
.caption { position: relative; padding: 19px 0 0 20px; }
.caption b { color: #0b0f1c; }
.legend { display: flex; align-items: center; gap: 11px; margin-top: 18px; }
.swatches { width: 21px; height: 203px; display: flex; flex-direction: column; border: solid #111; border-width: 1px 1px 0; }
.swatches i { flex: 1; border-bottom: 1px solid #111; }
.legend ol { height: 222px; display: flex; flex-direction: column; justify-content: space-between; }
.k1 { background: #f00; } .k2 { background: #ffb200; } .k3 { background: #ff0; } .k4 { background: #b2ff00; } .k5 { background: #0f0; }
.k6 { background: #00ffb2; } .k7 { background: #0ff; } .k8 { background: #00b2ff; } .k9 { background: #00f; }
.brand { position: absolute; top: 12px; right: 31px; color: #fff; display: flex; flex-direction: column; align-items: flex-end; }
.brand strong { font: 700 32px/40px "Open Sans", sans-serif; }
.brand span { font-size: 20px; line-height: 16px; }
.brand em { font-style: normal; font-size: 18px; line-height: 22px; margin: 10px 0 0; padding: 0 10px 0 18px; border: 2px solid; border-width: 2px 0; border-image: linear-gradient(90deg, transparent, #dde6fb 30%, #dde6fb 70%, transparent) 2; }
.tabs { position: relative; display: flex; background: #eee; border: 1px solid #222; }
.tabs svg { position: absolute; left: 0; top: -1px; width: 312px; height: 22px; }
.tabs button { position: relative; margin-left: 16px; }
.tabs .current { font-weight: 700; margin-left: 12px; }

/* bottom panels */
.bottom { display: grid; grid-template-columns: minmax(0, 513fr) minmax(0, 359fr); column-gap: 6px; padding-top: 7px; min-height: 0; }
.anim { height: 33px; display: grid; grid-template-columns: 10px 81px 24px 30px 35px 30px 11px 29px 29px 11px 172px 9px 1fr; align-items: center; background: #eee; white-space: nowrap; overflow: hidden; }
.anim svg { width: 20px; height: 20px; }
.anim .pause { position: relative; height: 26px; padding-left: 9px; border: 1px solid #fff; border-right-color: #999; border-bottom-color: #999; }
.anim .pause .pointer { position: absolute; left: 17px; top: 1px; width: 16px; height: 24px; z-index: 1; }
.anim button:nth-of-type(3) { padding-left: 7px; }
.rule { height: 22px; border-left: 1px solid #aaa; }
.off { color: #8c8c8c; }
.off select { background: #f3f3f3; opacity: 1; color: #8c8c8c; padding-left: 7px; }
.off::after { border-top-color: #999; }
.anim input { grid-column: 13; width: 100%; height: 21px; border: 0; padding: 0 0 0 5px; }
.plot { display: block; width: 100%; }
.plot text { font: 13px "Open Sans", sans-serif; fill: #333; }
.plot .strong { font-weight: 700; fill: #111; }
.plot .big { font-size: 15px; }
.end text { text-anchor: end; }
.mid text { text-anchor: middle; }
```
